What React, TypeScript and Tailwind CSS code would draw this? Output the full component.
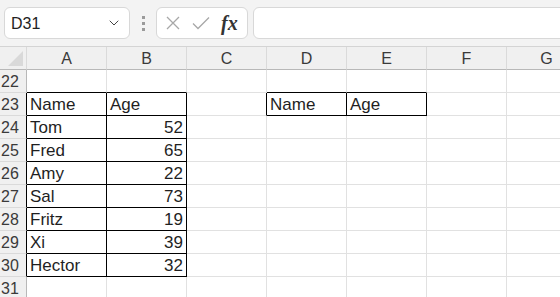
import { ChevronDown } from "lucide-react";

const cols = ["A", "B", "C", "D", "E", "F", "G"];
const rows = [22, 23, 24, 25, 26, 27, 28, 29, 30, 31];

const data: Record<string, { text: string; right?: boolean }> = {
  A23: { text: "Name" },
  B23: { text: "Age" },
  A24: { text: "Tom" },
  B24: { text: "52", right: true },
  A25: { text: "Fred" },
  B25: { text: "65", right: true },
  A26: { text: "Amy" },
  B26: { text: "22", right: true },
  A27: { text: "Sal" },
  B27: { text: "73", right: true },
  A28: { text: "Fritz" },
  B28: { text: "19", right: true },
  A29: { text: "Xi" },
  B29: { text: "39", right: true },
  A30: { text: "Hector" },
  B30: { text: "32", right: true },
  D23: { text: "Name" },
  E23: { text: "Age" },
};

// which cells draw a black edge on their right / bottom side
const inTable = (c: string, r: number) =>
  ((c === "A" || c === "B") && r >= 23 && r <= 30) ||
  ((c === "D" || c === "E") && r === 23);

const blackRight = (ci: number, r: number) =>
  inTable(cols[ci], r) || (ci + 1 < cols.length && inTable(cols[ci + 1], r));
const blackBottom = (ci: number, r: number) =>
  inTable(cols[ci], r) || inTable(cols[ci], r + 1);

const App = () => {
  return (
    <div
      className="w-[560px] h-[297px] overflow-hidden bg-white text-[#1f1f1f]"
      style={{ fontFamily: '"Liberation Sans", Arial, sans-serif' }}
    >
      {/* formula bar */}
      <div className="h-[47px] bg-[#f3f3f3] border-b border-[#d4d4d4] flex items-start pt-[7px] pl-[4px] w-[640px]">
        <div className="w-[126px] h-[32px] bg-white border border-[#d8d8d8] rounded-[6px] flex items-center justify-between pl-[6px] pr-[7px]">
          <span className="text-[16px] text-[#222] pt-[1px]">D31</span>
          <ChevronDown size={16} strokeWidth={1.5} className="text-[#444]" />
        </div>
        <div className="w-[26px] h-[32px] flex flex-col items-center justify-center gap-[3px]">
          <div className="w-[3px] h-[3px] bg-[#9a9a9a]" />
          <div className="w-[3px] h-[3px] bg-[#9a9a9a]" />
          <div className="w-[3px] h-[3px] bg-[#9a9a9a]" />
        </div>
        <div className="w-[92px] h-[32px] bg-white border border-[#d8d8d8] rounded-[6px] flex items-center pl-[8px] pr-[6px] gap-[10px]">
          <svg width="16" height="16" viewBox="0 0 16 16" className="text-[#a8a8a8]">
            <path d="M2 2 L14 14 M14 2 L2 14" stroke="currentColor" strokeWidth="1.3" fill="none" />
          </svg>
          <svg width="20" height="16" viewBox="0 0 20 16" className="text-[#a8a8a8]">
            <path d="M2 8.5 L7 13.5 L18 2.5" stroke="currentColor" strokeWidth="1.3" fill="none" />
          </svg>
          <span
            className="italic font-bold text-[20px] text-[#333] leading-none"
            style={{ fontFamily: '"Liberation Serif", "Times New Roman", serif' }}
          >
            fx
          </span>
        </div>
        <div className="ml-[5px] flex-1 h-[32px] bg-white border border-[#d8d8d8] rounded-[6px]" />
      </div>

      {/* sheet */}
      <div className="grid grid-cols-[27px_repeat(7,80px)] w-[640px]">
        {/* corner */}
        <div className="h-[23px] bg-[#f0f0f0] border-r border-b border-r-[#dadada] border-b-[#b8b8b8] flex items-end justify-end pr-[3px] pb-[3px]">
          <svg width="15" height="15" viewBox="0 0 15 15">
            <path d="M15 0 L15 15 L0 15 Z" fill="#d9d9d9" />
          </svg>
        </div>
        {cols.map((c) => (
          <div
            key={c}
            className="h-[23px] bg-[#f0f0f0] border-r border-b border-r-[#dadada] border-b-[#b8b8b8] flex items-end justify-center pb-[2px] text-[16px] leading-none text-[#3a3a3a]"
          >
            {c}
          </div>
        ))}

        {rows.map((r) => (
          <div key={r} className="contents">
            <div
              className={`h-[23px] bg-[#f0f0f0] border-b border-b-[#dadada] border-r flex items-end pb-[2px] pl-[1px] text-[16px] leading-none text-[#3a3a3a] ${
                inTable("A", r) ? "border-r-black" : "border-r-[#b8b8b8]"
              }`}
            >
              {r}
            </div>
            {cols.map((c, ci) => {
              const cell = data[`${c}${r}`];
              return (
                <div
                  key={c}
                  className={`h-[23px] border-r border-b flex items-end pb-[2px] px-[3px] text-[17px] leading-none whitespace-nowrap ${
                    blackRight(ci, r) ? "border-r-black" : "border-r-[#e1e1e1]"
                  } ${blackBottom(ci, r) ? "border-b-black" : "border-b-[#e1e1e1]"} ${
                    cell?.right ? "justify-end" : "justify-start"
                  }`}
                >
                  {cell?.text}
                </div>
              );
            })}
          </div>
        ))}
      </div>
    </div>
  );
};

export default App;
